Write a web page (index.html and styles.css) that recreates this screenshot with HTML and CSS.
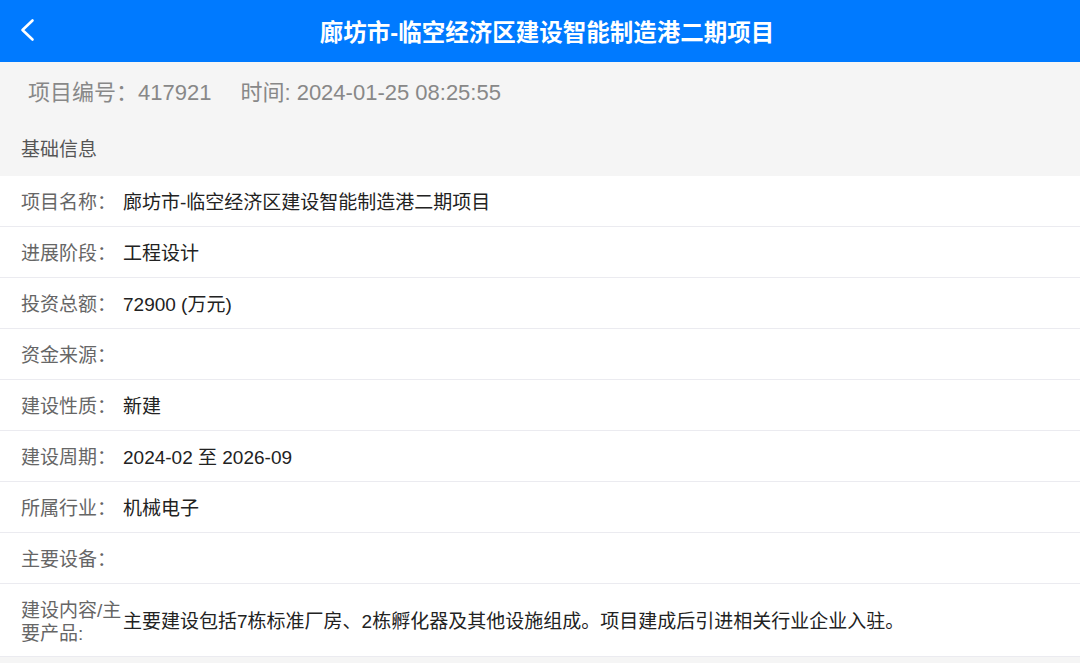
FILE: index.html
```html
<!DOCTYPE html>
<html lang="zh-CN">
  <head>
    <meta charset="UTF-8" />
    <meta name="viewport" content="width=device-width, initial-scale=1.0" />
    <title>项目详情</title>
    <link rel="stylesheet" href="styles.css">
  </head>
  <body>
    <div class="header">
      <a class="back" href="#">
        <svg width="16" height="24" viewBox="0 0 16 24">
          <polyline points="12.5,2.5 2.5,12 12.5,21.5" fill="none" stroke="#fff" stroke-width="2.6" stroke-linecap="round" stroke-linejoin="round" />
        </svg>
      </a>
      <h1>廊坊市-临空经济区建设智能制造港二期项目</h1>
    </div>

    <div class="meta">
      <span class="no">项目编号：417921</span>
      <span class="time">时间: 2024-01-25 08:25:55</span>
    </div>

    <div class="section-title">基础信息</div>

    <div class="info-list">
      <div class="row"><div class="label">项目名称：</div><div class="value">廊坊市-临空经济区建设智能制造港二期项目</div></div>
      <div class="row"><div class="label">进展阶段：</div><div class="value">工程设计</div></div>
      <div class="row"><div class="label">投资总额：</div><div class="value">72900 (万元)</div></div>
      <div class="row"><div class="label">资金来源：</div><div class="value"></div></div>
      <div class="row"><div class="label">建设性质：</div><div class="value">新建</div></div>
      <div class="row"><div class="label">建设周期：</div><div class="value">2024-02 至 2026-09</div></div>
      <div class="row"><div class="label">所属行业：</div><div class="value">机械电子</div></div>
      <div class="row"><div class="label">主要设备：</div><div class="value"></div></div>
      <div class="row tall"><div class="label">建设内容/主要产品:</div><div class="value">主要建设包括7栋标准厂房、2栋孵化器及其他设施组成。项目建成后引进相关行业企业入驻。</div></div>
    </div>
  </body>
</html>
```

FILE: styles.css
```css
body {
  margin: 0;
  background: #f5f5f5;
  font-family: "Liberation Sans", Arial, "Noto Sans CJK SC", sans-serif;
}

.header {
  height: 62px;
  background: #007aff;
  display: flex;
  align-items: center;
  justify-content: center;
  position: relative;
}

.back {
  position: absolute;
  left: 20px;
  top: 18px;
  display: block;
  line-height: 0;
}

.header h1 {
  margin: 0;
  color: #fff;
  font-size: 23.5px;
  font-weight: bold;
  padding-left: 14px;
}

.meta {
  height: 56px;
  display: flex;
  align-items: center;
  padding-left: 28px;
  font-size: 22px;
  color: #888;
}

.meta .time {
  margin-left: 29px;
}

.section-title {
  height: 58px;
  display: flex;
  align-items: center;
  padding-left: 21px;
  font-size: 19px;
  color: #555;
}

.info-list {
  background: #fff;
}

.row {
  display: flex;
  align-items: center;
  min-height: 47px;
  padding: 3px 0 0 21px;
  border-bottom: 1px solid #ebebf0;
  font-size: 19px;
  line-height: 23px;
}

.row.tall {
  min-height: 69px;
}

.label {
  width: 102px;
  flex-shrink: 0;
  color: #666;
}

.value {
  color: #222;
}
```
